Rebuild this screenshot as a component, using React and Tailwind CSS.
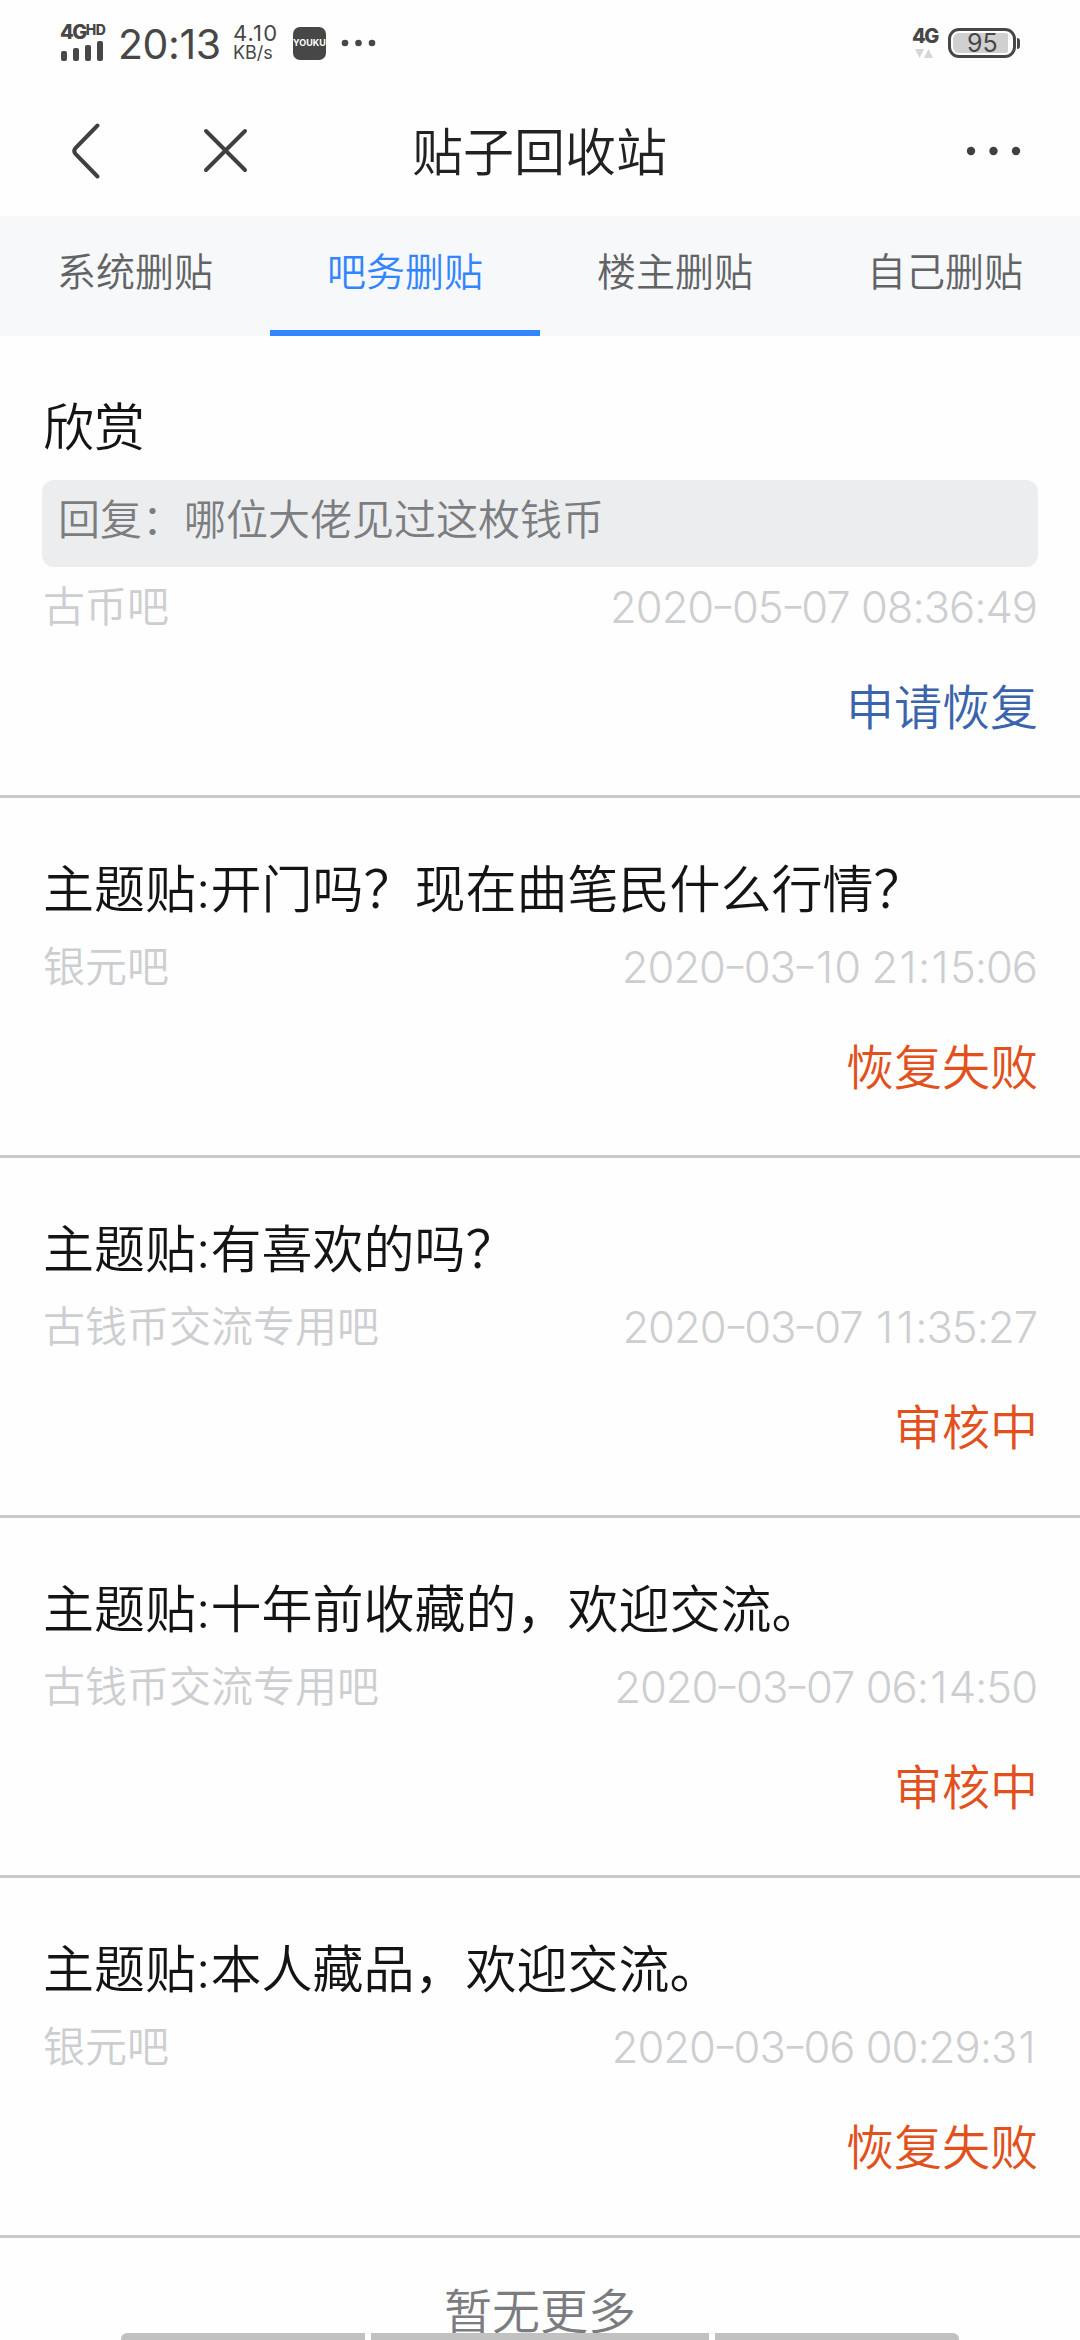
import { useState } from 'react'

const TABS = ['系统删贴', '吧务删贴', '楼主删贴', '自己删贴']

const POSTS = [
  { id: 1, title: '欣赏', reply: '回复：哪位大佬见过这枚钱币', bar: '古币吧', time: '2020-05-07 08:36:49', status: '申请恢复', canApply: true },
  { id: 2, title: '主题贴:开门吗？现在曲笔民什么行情？', bar: '银元吧', time: '2020-03-10 21:15:06', status: '恢复失败' },
  { id: 3, title: '主题贴:有喜欢的吗？', bar: '古钱币交流专用吧', time: '2020-03-07 11:35:27', status: '审核中' },
  { id: 4, title: '主题贴:十年前收藏的，欢迎交流。', bar: '古钱币交流专用吧', time: '2020-03-07 06:14:50', status: '审核中' },
  { id: 5, title: '主题贴:本人藏品，欢迎交流。', bar: '银元吧', time: '2020-03-06 00:29:31', status: '恢复失败' },
]

function StatusBar() {
  return (
    <div className="flex h-[86px] shrink-0 items-center justify-between pl-[60px] pr-[60px] text-[#474747]">
      <div className="flex items-center">
        <div className="flex w-[47px] flex-col">
          <div className="flex h-[15px] items-start font-extrabold">
            <span className="text-[20px] leading-[15px] tracking-[-1.5px]">4G</span>
            <span className="text-[14px] leading-[10px] tracking-[-0.5px]">HD</span>
          </div>
          <svg className="mt-px h-5 w-11" viewBox="0 0 44 20" fill="currentColor">
            <rect x="1" y="10" width="6" height="10" rx="2" />
            <rect x="13" y="7" width="6" height="13" rx="2" />
            <rect x="25" y="4" width="6" height="16" rx="2" />
            <rect x="37" y="0" width="6" height="20" rx="2" />
          </svg>
        </div>
        <span className="ml-[11px] w-[102px] whitespace-nowrap pt-[2px] text-[41px] leading-[50px] tracking-[-0.4px]">20:13</span>
        <div className="ml-[13px] flex w-[46px] flex-col whitespace-nowrap">
          <span className="text-[22px] leading-[19px] tracking-[1.1px]">4.10</span>
          <span className="text-[18px] leading-[19px]">KB/s</span>
        </div>
        <div className="ml-[14px] flex size-[33px] items-center justify-center rounded-[7px] bg-[#474747] text-[9px] font-bold text-white">
          YOUKU
        </div>
        <svg className="ml-[15px] h-2 w-[36px]" viewBox="0 0 36 8" fill="currentColor">
          <circle cx="4" cy="4" r="3.3" />
          <circle cx="17.5" cy="4" r="3.3" />
          <circle cx="31" cy="4" r="3.3" />
        </svg>
      </div>
      <div className="flex items-center">
        <div className="flex w-6 flex-col">
          <span className="text-[20px] font-extrabold leading-[15px] tracking-[-1.5px]">4G</span>
          <svg className="mt-[5px] h-[9px] w-6" viewBox="0 0 24 9" fill="#d6d6d6">
            <path d="M3 0h9l-4.500 9zM12 9h9l-4.500-9z" />
          </svg>
        </div>
        <div className="ml-3 flex h-[30px] w-[68px] items-center justify-center rounded-[11px] border-[3px] border-[#474747] p-[2px]">
          <div className="flex h-full w-full items-center rounded-md bg-[linear-gradient(to_right,#d0d0d0_95%,transparent_95%)] pl-[14px] text-[25px] leading-none">
            95
          </div>
        </div>
        <div className="ml-px h-[11px] w-[3px] rounded-r-sm bg-[#474747]" />
      </div>
    </div>
  )
}

function Header() {
  return (
    <header className="flex h-[130px] shrink-0 items-center text-[#3f4040]">
      <div className="flex w-[412px] items-center">
        <svg className="ml-[70px] h-[58px] w-8" viewBox="0 0 32 58" fill="none" stroke="currentColor" strokeWidth="4" strokeLinecap="round">
          <path d="M27.500 3.500L5.500 26Q3 29 5.500 32L27.500 54.500" />
        </svg>
        <svg className="ml-[100px] h-12 w-12" viewBox="0 0 48 48" fill="none" stroke="currentColor" strokeWidth="4" strokeLinecap="round">
          <path d="M4 4L43 43M43 4L4 43" />
        </svg>
      </div>
      <h1 className="w-[257px] whitespace-nowrap pt-[3px] text-[51px] font-[350] leading-[60px] text-[#222]">贴子回收站</h1>
      <svg className="ml-[296px] h-3 w-14" viewBox="0 0 56 12" fill="currentColor">
        <circle cx="6" cy="6" r="4.200" />
        <circle cx="28.500" cy="6" r="4.200" />
        <circle cx="51" cy="6" r="4.200" />
      </svg>
    </header>
  )
}

// the "1" and "-" are narrow in Inter, so widen them a bit
function Time({ value }) {
  return (
    <time className="whitespace-pre pr-px pt-[3px] text-[43.5px] tracking-[-1px]">
      {value.split(/([1-])/).map((part, i) => {
        if (part === '1') return <span key={i} className="mx-[2.3px]">1</span>
        if (part === '-') return <span key={i} className="inline-block -translate-y-[2px] scale-x-125">-</span>
        return part
      })}
    </time>
  )
}

function Post({ post }) {
  return (
    <li className="flex flex-col border-b-[3px] border-[#c9c9c9] px-[42px] pt-[62px]">
      <h2 className="h-[60px] whitespace-nowrap pl-px text-[51px] leading-[60px] text-[#141414]">{post.title}</h2>
      {post.reply && (
        <p className="mt-[22px] h-[87px] rounded-xl bg-[#ecedef] pl-4 text-[42px] leading-[80px] text-[#7c7d80]">{post.reply}</p>
      )}
      <div className={`flex h-[50px] items-center justify-between pl-px text-[42px] text-[#cdced1] ${post.reply ? 'mt-[14px]' : 'mt-[21px]'}`}>
        <span>{post.bar}</span>
        <Time value={post.time} />
      </div>
      <button className={`mb-[57px] mt-[47px] h-[60px] self-end text-[48px] leading-[60px] ${post.canApply ? 'text-[#3a64ac]' : 'text-[#e2501c]'}`}>
        {post.status}
      </button>
    </li>
  )
}

export default function App() {
  const [active, setActive] = useState(1)

  return (
    <div className="flex h-[2340px] w-[1080px] flex-col overflow-hidden bg-[#fefefe] font-['Inter','Noto_Sans_CJK_SC',sans-serif]">
      <StatusBar />
      <Header />

      {/* Tabs */}
      <nav className="grid h-[120px] shrink-0 grid-cols-4 bg-[#f6f8fa]">
        {TABS.map((tab, i) => (
          <button
            key={tab}
            onClick={() => setActive(i)}
            className={`border-b-[6px] pb-[2px] text-[39px] font-[350] ${i === active ? 'border-[#3385ff] text-[#3385ff]' : 'border-transparent text-[#626365]'}`}
          >
            {tab}
          </button>
        ))}
      </nav>

      <ul className="shrink-0 font-[350]">
        {POSTS.map((post) => (
          <Post key={post.id} post={post} />
        ))}
      </ul>
      <p className="mt-[44px] h-[51px] shrink-0 text-center text-[48px] font-[350] leading-[60px] text-[#7b7c80]">暂无更多</p>

      {/* Gesture bar */}
      <div className="z-10 flex h-[7px] shrink-0 justify-center gap-[6px]">
        <div className="w-[244px] rounded-tl-md bg-[#c1c1c1]" />
        <div className="w-[338px] bg-[#c1c1c1]" />
        <div className="w-[244px] rounded-tr-md bg-[#c1c1c1]" />
      </div>
    </div>
  )
}
